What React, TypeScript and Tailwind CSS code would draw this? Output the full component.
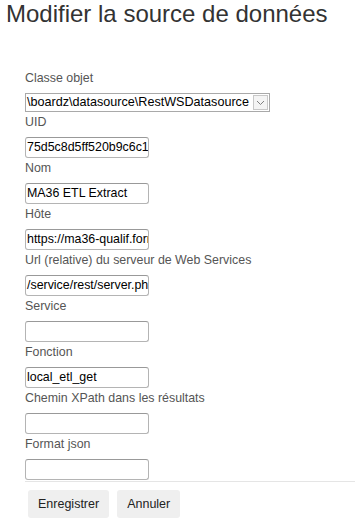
import React from "react";

const fields: { label: string; value: string }[] = [
  { label: "UID", value: "75d5c8d5ff520b9c6c1" },
  { label: "Nom", value: "MA36 ETL Extract" },
  { label: "Hôte", value: "https://ma36-qualif.forma" },
  { label: "Url (relative) du serveur de Web Services", value: "/service/rest/server.php" },
  { label: "Service", value: "" },
  { label: "Fonction", value: "local_etl_get" },
  { label: "Chemin XPath dans les résultats", value: "" },
  { label: "Format json", value: "" },
];

export default function App() {
  return (
    <div
      className="w-[355px] h-[520px] overflow-hidden bg-white"
      style={{ fontFamily: '"Liberation Sans", Arial, sans-serif' }}
    >
      <h1 className="pl-[6px] text-[24px] leading-[28px] text-[#333333] font-normal whitespace-nowrap">
        Modifier la source de données
      </h1>
      <div className="mt-[40px] pl-[25px]">
        <div className="h-[20px] mb-[5px] text-[12.4px] leading-[20px] text-[#555555]">Classe objet</div>
        <div className="flex items-center w-[245px] h-[19px] border border-[#a9a9a9] bg-white">
          <div className="flex-1 pl-[1px] text-[12.6px] leading-[17px] text-black whitespace-nowrap overflow-hidden">
            \boardz\datasource\RestWSDatasource
          </div>
          <div className="w-[15px] h-[15px] mr-[1px] border border-[#c8c8c8] bg-[#f4f4f4] flex items-center justify-center">
            <svg width="9" height="6" viewBox="0 0 9 6">
              <path d="M1 1 L4.5 4.5 L8 1" fill="none" stroke="#808080" strokeWidth="1" />
            </svg>
          </div>
        </div>
        {fields.map((f) => (
          <div key={f.label}>
            <div className="h-[20px] mb-[5px] text-[12.4px] leading-[20px] text-[#555555] whitespace-nowrap">
              {f.label}
            </div>
            <div className="w-[124px] h-[21px] border border-[#b4b4b4] border-t-[#999999] rounded-[3px] bg-white overflow-hidden">
              <div className="pl-[1px] text-[12.4px] leading-[19px] text-black whitespace-nowrap overflow-hidden">
                {f.value}
              </div>
            </div>
          </div>
        ))}
        <div className="mt-[1px] h-[1px] bg-[#e5e5e5]" />
        <div className="flex gap-[8px] pl-[3px] mt-[8px]">
          <div className="h-[28px] px-[10px] rounded-[3px] bg-[#efefef] text-[12.5px] leading-[28px] text-[#222222]">
            Enregistrer
          </div>
          <div className="h-[28px] px-[10px] rounded-[3px] bg-[#efefef] text-[12.5px] leading-[28px] text-[#222222]">
            Annuler
          </div>
        </div>
      </div>
    </div>
  );
}
